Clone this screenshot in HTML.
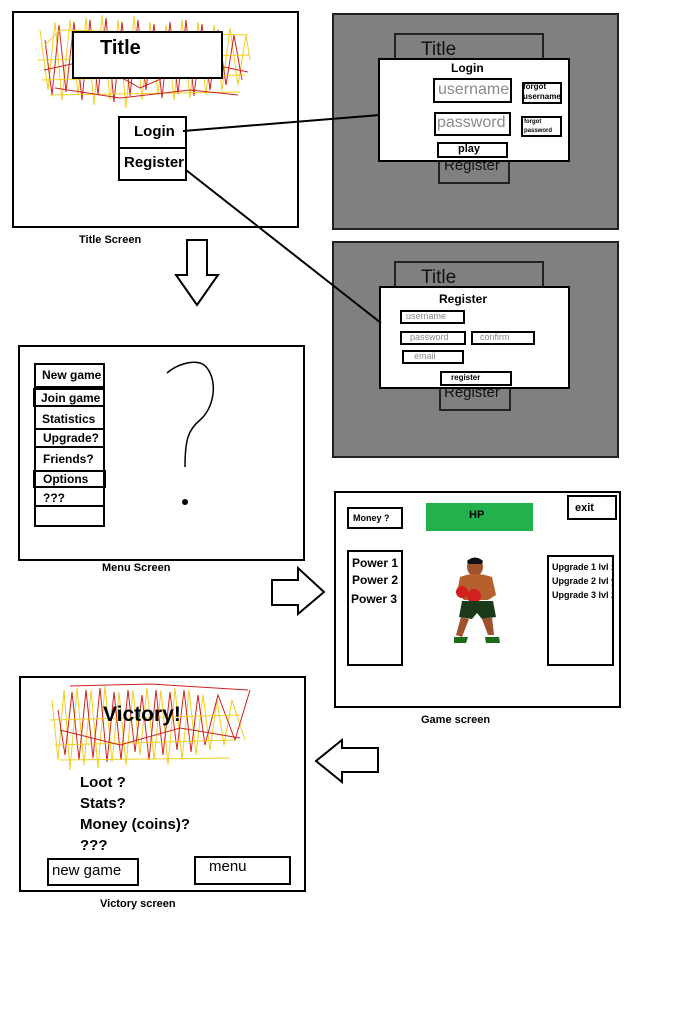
<!DOCTYPE html>
<html><head><meta charset="utf-8">
<style>
html,body{margin:0;padding:0;background:#fff;}
body{width:687px;height:1023px;position:relative;overflow:hidden;font-family:"Liberation Sans",sans-serif;font-weight:bold;color:#000;}
.a{position:absolute;box-sizing:border-box;}
.b{border:2px solid #000;background:#fff;}
.t{position:absolute;white-space:nowrap;}
.g{color:#8a8a8a;font-weight:normal;}
</style></head><body>
<svg class="a" style="left:0;top:0" width="687" height="1023">
<g fill="none" stroke-width="1">
<path stroke="#f2cf1f" d="M40,30 L48,90 L55,22 L62,100 L70,20 L78,95 L86,18 L94,105 L102,15 L110,100 L118,20 L126,108 L134,16 L142,100 L150,22 L158,95 L166,25 L174,100 L182,20 L190,98 L198,22 L206,95 L214,25 L222,90 L230,28 L238,85 L246,35 L250,60"/>
<path stroke="#d02020" d="M45,40 L52,95 L59,25 L66,92 L74,22 L82,100 L90,20 L98,95 L106,18 L114,102 L122,22 L130,96 L138,20 L146,90 L154,24 L162,98 L170,22 L178,94 L186,20 L194,96 L202,24 L210,90 L218,30 L226,85 L234,35 L242,80"/>
<path stroke="#f2cf1f" d="M38,60 L250,55 M42,80 L245,75 M50,95 L240,92 M45,45 L60,30 L248,35"/>
<path stroke="#d02020" d="M44,70 L90,60 L140,88 L200,62 L248,72 M55,88 L120,98 L190,90 L238,95"/>
</g>
<g fill="none" stroke-width="1">
<path stroke="#f2cf1f" d="M52,700 L58,760 L64,690 L70,770 L77,688 L84,765 L91,690 L98,768 L105,686 L112,762 L119,692 L126,765 L133,690 L140,755 L147,688 L154,760 L161,690 L168,765 L175,688 L182,760 L189,690 L196,755 L203,695 L210,750 L217,700 L224,745 L232,700 L245,740"/>
<path stroke="#d02020" d="M58,710 L65,755 L72,692 L79,760 L86,690 L93,758 L100,688 L107,762 L114,692 L121,760 L128,690 L135,752 L142,695 L149,760 L156,690 L163,755 L170,692 L177,750 L184,690 L191,752 L198,695 L205,745 L218,695 L235,740 L250,690"/>
<path stroke="#f2cf1f" d="M50,720 L240,715 M55,745 L235,740 M60,760 L230,758"/>
<path stroke="#d02020" d="M60,730 L120,745 L180,728 L240,738 M70,686 L150,684 L248,690"/>
</g>
<path d="M187,240 L207,240 L207,275 L218,275 L197,305 L176,275 L187,275 Z" fill="#fff" stroke="#000" stroke-width="2"/>
<path d="M272,580 L298,580 L298,568 L324,592 L298,614 L298,605 L272,605 Z" fill="#fff" stroke="#000" stroke-width="2"/>
<path d="M378,748 L342,748 L342,740 L316,761 L342,782 L342,772 L378,772 Z" fill="#fff" stroke="#000" stroke-width="2"/>
<path d="M167,373 C180,362 200,358 207,368 C218,382 214,408 200,420 C188,430 185,440 185,467" fill="none" stroke="#000" stroke-width="1.5"/>
<circle cx="185" cy="502" r="3" fill="#000"/>
</svg>

<div class="a b" style="left:12px;top:11px;width:287px;height:217px;background:transparent"></div>
<div class="a b" style="left:72px;top:31px;width:151px;height:48px"></div>
<div class="t" style="left:100px;top:37px;font-size:20px">Title</div>
<div class="a b" style="left:118px;top:116px;width:69px;height:33px"></div>
<div class="t" style="left:134px;top:123px;font-size:15px">Login</div>
<div class="a b" style="left:118px;top:147px;width:69px;height:34px"></div>
<div class="t" style="left:124px;top:154px;font-size:15px">Register</div>
<div class="t" style="left:79px;top:234px;font-size:11px">Title Screen</div>

<div class="a" style="left:332px;top:13px;width:287px;height:217px;background:#808080;border:2px solid #222"></div>
<div class="a" style="left:394px;top:33px;width:150px;height:30px;border:2px solid #222"></div>
<div class="t" style="left:421px;top:39px;font-size:19px;font-weight:normal;color:#111">Title</div>
<div class="a" style="left:438px;top:150px;width:72px;height:34px;border:2px solid #222"></div>
<div class="t" style="left:444px;top:157px;font-size:15px;font-weight:normal;color:#111">Register</div>
<div class="a b" style="left:378px;top:58px;width:192px;height:104px"></div>
<div class="t" style="left:451px;top:61px;font-size:12px">Login</div>
<div class="a b" style="left:433px;top:78px;width:79px;height:25px"></div>
<div class="t g" style="left:438px;top:81px;font-size:16px">username</div>
<div class="a b" style="left:522px;top:82px;width:40px;height:22px"></div>
<div class="t" style="left:523px;top:82px;font-size:8px;line-height:10px">forgot<br>username</div>
<div class="a b" style="left:434px;top:112px;width:77px;height:24px"></div>
<div class="t g" style="left:437px;top:114px;font-size:16px">password</div>
<div class="a b" style="left:521px;top:116px;width:41px;height:21px"></div>
<div class="t" style="left:524px;top:118px;font-size:6px;line-height:9px">forgot<br>password</div>
<div class="a b" style="left:437px;top:142px;width:71px;height:16px"></div>
<div class="t" style="left:458px;top:143px;font-size:11px">play</div>

<div class="a" style="left:332px;top:241px;width:287px;height:217px;background:#808080;border:2px solid #222"></div>
<div class="a" style="left:394px;top:261px;width:150px;height:30px;border:2px solid #222"></div>
<div class="t" style="left:421px;top:267px;font-size:19px;font-weight:normal;color:#111">Title</div>
<div class="a" style="left:439px;top:380px;width:72px;height:31px;border:2px solid #222"></div>
<div class="t" style="left:444px;top:384px;font-size:15px;font-weight:normal;color:#111">Register</div>
<div class="a b" style="left:379px;top:286px;width:191px;height:103px"></div>
<div class="t" style="left:439px;top:292px;font-size:12px">Register</div>
<div class="a b" style="left:400px;top:310px;width:65px;height:14px"></div>
<div class="t g" style="left:406px;top:311px;font-size:9px">username</div>
<div class="a b" style="left:400px;top:331px;width:66px;height:14px"></div>
<div class="t g" style="left:410px;top:332px;font-size:9px">password</div>
<div class="a b" style="left:471px;top:331px;width:64px;height:14px"></div>
<div class="t g" style="left:480px;top:332px;font-size:9px">confirm</div>
<div class="a b" style="left:402px;top:350px;width:62px;height:14px"></div>
<div class="t g" style="left:414px;top:351px;font-size:9px">email</div>
<div class="a b" style="left:440px;top:371px;width:72px;height:15px"></div>
<div class="t" style="left:451px;top:373px;font-size:8px">register</div>

<svg class="a" style="left:0;top:0" width="687" height="1023">
<path d="M183,131 L380,115 M186,170 L381,323" stroke="#000" stroke-width="2"/>
</svg>

<div class="a" style="left:18px;top:345px;width:287px;height:216px;border:2px solid #000"></div>
<div class="a b" style="left:34px;top:363px;width:71px;height:164px"></div>
<div class="a" style="left:34px;top:386px;width:71px;height:2px;background:#000"></div>
<div class="a" style="left:33px;top:388px;width:72px;height:19px;border:2px solid #000"></div>
<div class="a" style="left:34px;top:428px;width:71px;height:20px;border:2px solid #000"></div>
<div class="a" style="left:33px;top:470px;width:73px;height:18px;border:2px solid #000"></div>
<div class="a" style="left:34px;top:505px;width:71px;height:2px;background:#000"></div>
<div class="t" style="left:42px;top:368px;font-size:12px">New game</div>
<div class="t" style="left:41px;top:391px;font-size:12px">Join game</div>
<div class="t" style="left:42px;top:412px;font-size:12px">Statistics</div>
<div class="t" style="left:43px;top:431px;font-size:12px">Upgrade?</div>
<div class="t" style="left:43px;top:452px;font-size:12px">Friends?</div>
<div class="t" style="left:43px;top:472px;font-size:12px">Options</div>
<div class="t" style="left:43px;top:491px;font-size:12px">???</div>
<div class="t" style="left:102px;top:562px;font-size:11px">Menu Screen</div>

<div class="a" style="left:334px;top:491px;width:287px;height:217px;border:2px solid #000"></div>
<div class="a b" style="left:347px;top:507px;width:56px;height:22px"></div>
<div class="t" style="left:353px;top:513px;font-size:9px">Money ?</div>
<div class="a" style="left:426px;top:503px;width:107px;height:28px;background:#22b14c"></div>
<div class="t" style="left:469px;top:509px;font-size:11px">HP</div>
<div class="a b" style="left:567px;top:495px;width:50px;height:25px"></div>
<div class="t" style="left:575px;top:502px;font-size:11px">exit</div>
<div class="a b" style="left:347px;top:550px;width:56px;height:116px"></div>
<div class="t" style="left:352px;top:556px;font-size:12px">Power 1</div>
<div class="t" style="left:352px;top:573px;font-size:12px">Power 2</div>
<div class="t" style="left:351px;top:592px;font-size:12px">Power 3</div>
<div class="a b" style="left:547px;top:555px;width:67px;height:111px;overflow:hidden">
<div class="t" style="left:3px;top:3px;font-size:9px;line-height:14px">Upgrade 1 lvl x<br>Upgrade 2 lvl y<br>Upgrade 3 lvl z</div></div>
<svg class="a" style="left:452px;top:555px" width="60" height="95">
<ellipse cx="23" cy="12" rx="8" ry="9" fill="#a0522d"/>
<path d="M15,6 Q23,-1 31,6 L30,9 L16,9Z" fill="#111"/>
<path d="M8,22 Q23,16 40,22 L44,40 L36,45 L12,45 L5,38Z" fill="#b5602c"/>
<circle cx="10" cy="37" r="6" fill="#d21f1f"/><circle cx="22" cy="41" r="7" fill="#d21f1f"/>
<path d="M10,46 L41,46 L44,62 L30,64 L25,58 L20,64 L7,62Z" fill="#1a3a1a"/>
<path d="M9,62 L4,80 L10,82 L17,64Z M30,64 L36,80 L42,80 L40,62Z" fill="#a0522d"/>
<path d="M2,82 L16,82 L14,88 L2,88Z M33,82 L47,82 L48,88 L34,88Z" fill="#1b6b1b"/>
</svg>
<div class="t" style="left:421px;top:714px;font-size:11px">Game screen</div>

<div class="a" style="left:19px;top:676px;width:287px;height:216px;border:2px solid #000"></div>
<div class="t" style="left:103px;top:703px;font-size:21px">Victory!</div>
<div class="t" style="left:80px;top:772px;font-size:15px;line-height:21px">Loot ?<br>Stats?<br>Money (coins)?<br>???</div>
<div class="a b" style="left:47px;top:858px;width:92px;height:28px"></div>
<div class="t" style="left:52px;top:862px;font-size:15px;font-weight:normal">new game</div>
<div class="a b" style="left:194px;top:856px;width:97px;height:29px"></div>
<div class="t" style="left:209px;top:858px;font-size:15px;font-weight:normal">menu</div>
<div class="t" style="left:100px;top:898px;font-size:11px">Victory screen</div>
</body></html>
